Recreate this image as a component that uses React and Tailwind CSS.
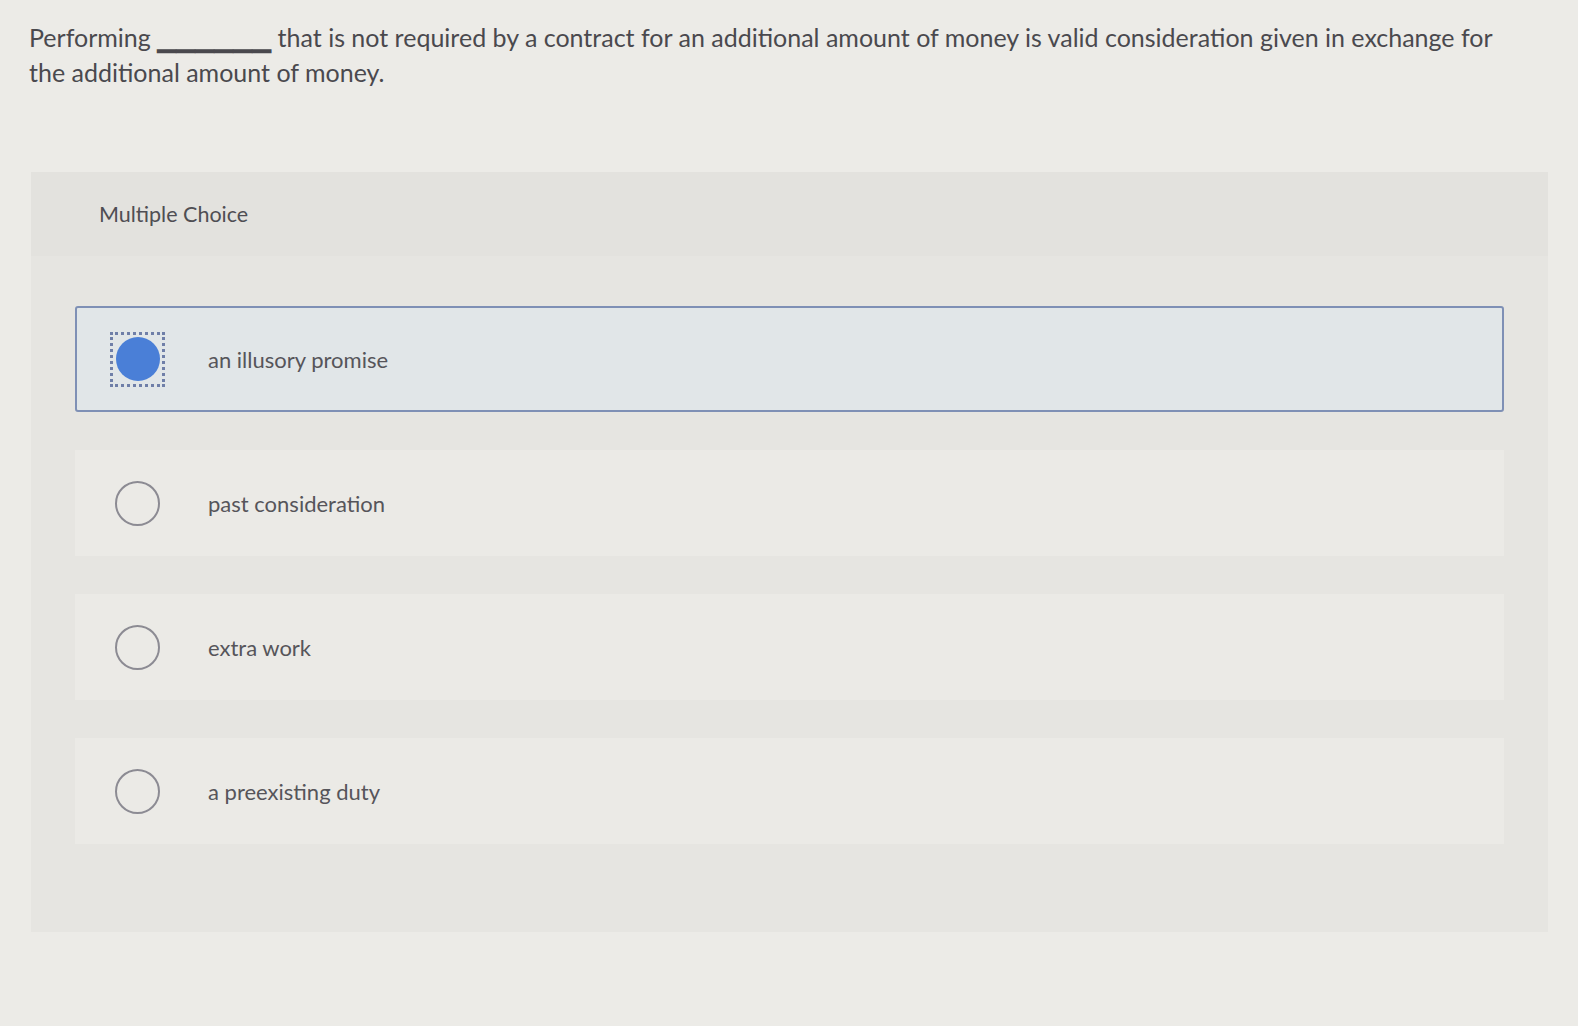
import React, { useState } from 'react';

const options = ['an illusory promise', 'past consideration', 'extra work', 'a preexisting duty'];

const Radio = ({ checked }) => {
  if (checked) {
    return (
      <div className="w-[55px] h-[55px] flex items-center justify-center border-[3px] border-dotted border-[#6f7fa8]">
        <div className="w-[44px] h-[44px] rounded-full bg-[#4a7fd7]" />
      </div>
    );
  }
  return (
    <div className="w-[55px] h-[55px] flex items-center justify-center">
      <div className="w-[45px] h-[45px] rounded-full border-2 border-[#8c8b93]" />
    </div>
  );
};

const App = () => {
  const [selected, setSelected] = useState(0);

  return (
    <div className="min-h-screen w-full bg-[#ecebe7] pt-[20px] pb-[90px] font-['Lato',sans-serif] text-[#4a494e]">
      <p className="pl-[29px] w-[1532px] text-[25px] leading-[35px]">
        Performing ▁▁▁▁▁▁ that is not required by a contract for an additional amount of money is valid consideration
        given in exchange for the additional amount of money.
      </p>

      <div className="ml-[31px] mt-[82px] w-[1517px] bg-[#e6e5e1]">
        <div className="h-[84px] flex items-center pl-[68px] bg-[#e3e2de] text-[21.5px] text-[#4f4e53]">Multiple Choice</div>

        <div className="flex flex-col gap-[38px] px-[44px] pt-[50px] pb-[88px]">
          {options.map((opt, i) => (
            <div
              key={opt}
              onClick={() => setSelected(i)}
              className={
                i === selected
                  ? 'h-[106px] flex items-center pl-[33px] gap-[43px] rounded-[3px] border-2 border-[#7f90b5] bg-[#e1e6e8] cursor-pointer'
                  : 'h-[106px] flex items-center pl-[35px] gap-[43px] bg-[#ebeae6] cursor-pointer'
              }
            >
              <Radio checked={i === selected} />
              <span className="text-[22px] text-[#56555a]">{opt}</span>
            </div>
          ))}
        </div>
      </div>
    </div>
  );
};

export default App;
